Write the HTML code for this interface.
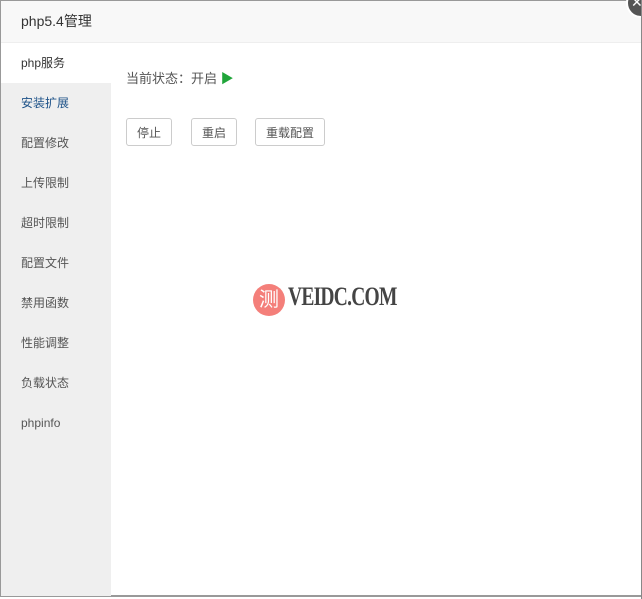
<!DOCTYPE html>
<html><head><meta charset="utf-8"><style>
body{margin:0;width:642px;height:599px;overflow:hidden;background:#fff;font-family:"Liberation Sans","Noto Sans CJK SC",sans-serif;position:relative}
.frame{position:absolute;left:0;top:0;width:641px;height:597px;border-left:1px solid #999;border-top:1px solid #999;border-bottom:2px solid #999;box-sizing:border-box;background:#fff}
.title{position:absolute;left:1px;top:1px;right:0;height:41px;background:#f8f8f8;border-bottom:1px solid #eee;font-size:14px;color:#333;line-height:41px;padding-left:20px}
.side{position:absolute;left:1px;top:43px;width:110px;height:553px;background:#efefef}
.side div{height:40px;line-height:40px;padding-left:20px;font-size:12px;color:#555}
.side .act{background:#fff;color:#333}
.side .blue{color:#20548a}
.status{position:absolute;left:126px;top:68px;font-size:13px;color:#555}
.btn{position:absolute;top:118px;height:28px;border:1px solid #ccc;border-radius:3px;font-size:12px;color:#555;line-height:28px;text-align:center;box-sizing:border-box}
.close{position:absolute;right:-14px;top:-12px;width:26px;height:26px;border-radius:50%;background:#555;border:2px solid #fff;color:#fff;font-size:14px;line-height:24px;text-indent:3px}
</style></head><body>
<div class="frame"></div>
<div class="title">php5.4管理</div>
<div class="close">✕</div>
<div style="position:absolute;left:641px;top:0;width:1px;height:599px;background:#888"></div>
<div class="side">
<div class="act">php服务</div><div class="blue">安装扩展</div><div>配置修改</div><div>上传限制</div><div>超时限制</div><div>配置文件</div><div>禁用函数</div><div>性能调整</div><div>负载状态</div><div>phpinfo</div>
</div>
<div class="status">当前状态：开启 <span style="color:#20a53a">▶</span></div>
<div class="btn" style="left:126px;width:46px">停止</div>
<div class="btn" style="left:191px;width:46px">重启</div>
<div class="btn" style="left:255px;width:70px">重载配置</div>
<div style="position:absolute;left:253px;top:284px;width:32px;height:32px;border-radius:50%;background:#f47f7a;color:#fff;font-size:20px;line-height:32px;text-align:center">测</div>
<div style="position:absolute;left:288px;top:282px;font-family:'Liberation Serif',serif;font-weight:bold;font-size:26px;color:#444;letter-spacing:-1px;transform:scaleX(0.75);transform-origin:left">VEIDC.COM</div>
</body></html>
